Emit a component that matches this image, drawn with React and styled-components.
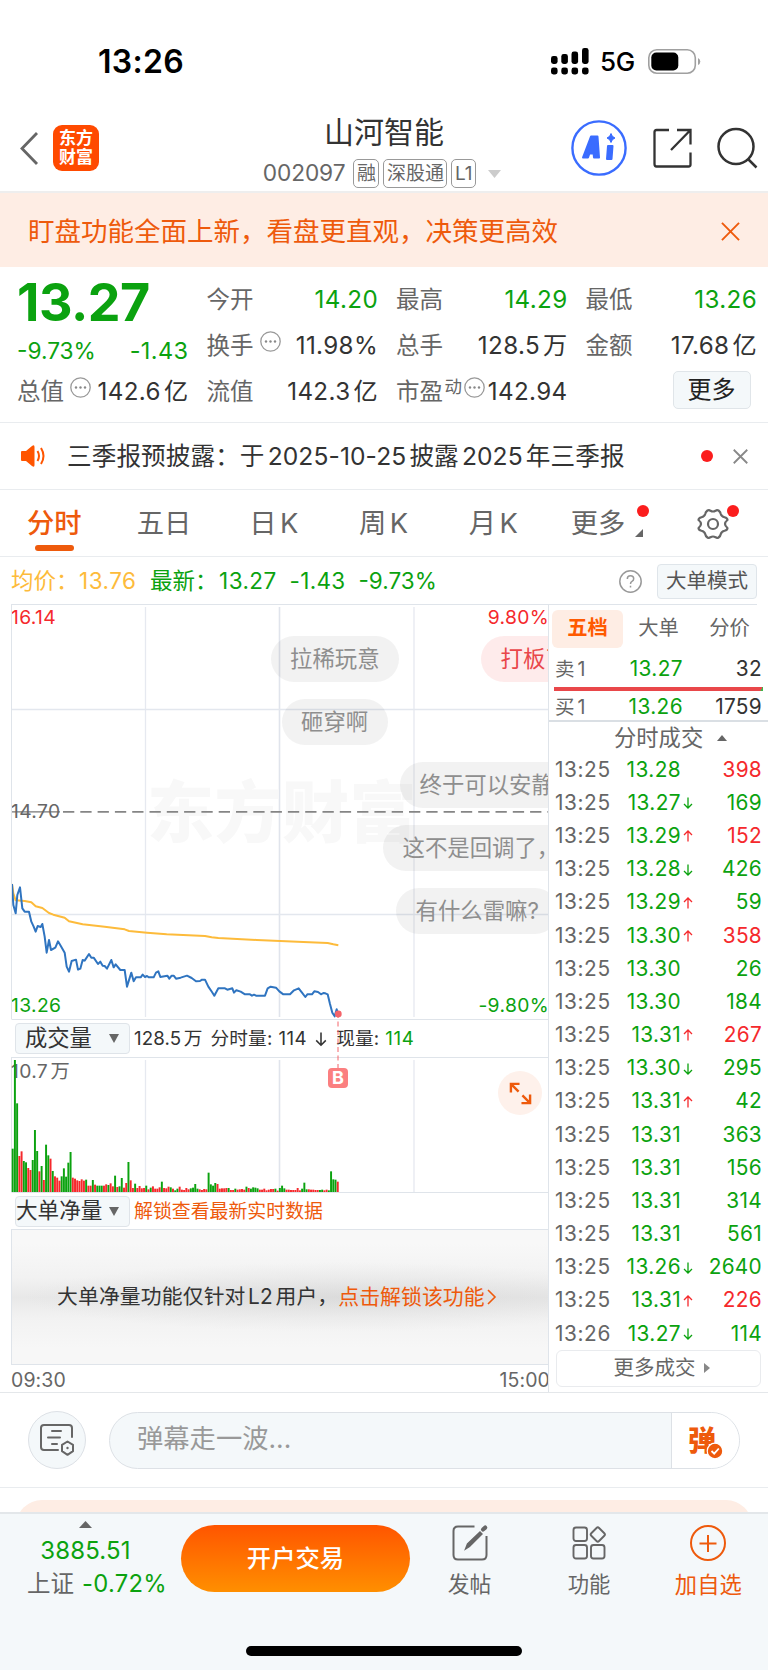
import React from "react";
import styled, { createGlobalStyle } from "styled-components";

const GREEN = "#0ba20f";
const RED = "#f5292c";
const ORANGE = "#ee5a0c";
const GREY = "#666";
const INK = "#333";
const LINE = "#e9ecef";

const Global = createGlobalStyle`
  * { box-sizing: border-box; }
  body {
    margin: 0;
    background: #fff;
    font-family: Inter, "Noto Sans CJK SC", sans-serif;
    line-height: 1;
    color: ${INK};
    text-autospace: normal;
  }
  svg { display: block; flex: none; overflow: visible; }
`;

const Screen = styled.div`
  width: 768px;
  height: 1670px;
  display: flex;
  flex-direction: column;
  overflow: hidden;
  background: #fff;
`;

const T = styled.span`
  font-size: ${(p) => p.$s}px;
  color: ${(p) => p.$c || INK};
  font-weight: ${(p) => p.$w || 400};
  letter-spacing: ${(p) => p.$ls || 0}px;
  margin-left: ${(p) => p.$ml || 0}px;
  margin-right: ${(p) => p.$mr || 0}px;
  white-space: pre;
`;

/* ---------- status bar ---------- */
const StatusBar = styled.div`
  height: 100px;
  flex: none;
  display: flex;
  align-items: center;
  justify-content: space-between;
  padding: 23px 67px 0 98px;
`;
const StatusRight = styled.div`
  display: flex;
  align-items: center;
`;

/* ---------- header ---------- */
const Header = styled.header`
  height: 93px;
  flex: none;
  display: grid;
  grid-template-columns: 1fr auto 1fr;
  border-bottom: 2px solid #eee;
`;
const HeaderLeft = styled.div`
  display: flex;
  align-items: center;
  gap: 15px;
  padding: 5px 0 0 20px;
`;
const Logo = styled.div`
  width: 46px;
  height: 46px;
  border-radius: 9px;
  background: #ff4a00;
  color: #fff;
  font-size: 17px;
  font-weight: 700;
  line-height: 19px;
  display: flex;
  flex-direction: column;
  align-items: center;
  justify-content: center;
`;
const HeaderTitle = styled.div`
  display: flex;
  flex-direction: column;
  align-items: center;
  padding-top: 17px;
`;
const SubTitle = styled.div`
  display: flex;
  align-items: center;
  height: 29px;
  margin: 12px 4px 0 0;
`;
const Badge = styled.span`
  height: 29px;
  border: 1.5px solid #999;
  border-radius: 5px;
  padding: 0 2.5px;
  margin-right: 4px;
  display: flex;
  align-items: center;
  font-size: 19px;
  color: ${GREY};
`;
const HeaderRight = styled.div`
  display: flex;
  align-items: center;
  justify-content: flex-end;
  gap: 25.5px;
  padding: 5px 10px 0 0;
`;

/* ---------- banner ---------- */
const Banner = styled.div`
  height: 74px;
  flex: none;
  background: #feede4;
  display: flex;
  align-items: center;
  justify-content: space-between;
  padding: 2px 28px 0 28px;
`;

/* ---------- quote ---------- */
const Quote = styled.section`
  height: 156px;
  flex: none;
  display: grid;
  grid-template-columns: repeat(4, 170px);
  grid-template-rows: repeat(3, 46px);
  column-gap: 19.5px;
  padding: 10px 0 0 17px;
  border-bottom: 1px solid ${LINE};
`;
const Cell = styled.div`
  display: flex;
  align-items: center;
  justify-content: ${(p) => (p.$end ? "flex-end" : "space-between")};
`;
const LabelGroup = styled.div`
  display: flex;
  align-items: center;
  gap: ${(p) => p.$gap ?? 7}px;
  margin-right: -20px;
`;
const Raised = styled.span`
  display: flex;
  padding-bottom: 10px;
`;
const Price = styled.div`
  grid-row: 1 / 3;
  display: flex;
  flex-direction: column;
`;
const PriceBig = styled.div`
  height: 52px;
  font-size: 52px;
  font-weight: 650;
  letter-spacing: -0.5px;
  color: ${GREEN};
`;
const PriceChange = styled.div`
  display: flex;
  align-items: center;
  justify-content: space-between;
  height: 30px;
  margin-top: 7px;
`;
const MoreButton = styled.button`
  width: 78px;
  height: 38px;
  margin: 0 5px 5px 0;
  border: 1.5px solid #e0e5e9;
  border-radius: 5px;
  background: #f4f8fa;
  font: 400 24px Inter, "Noto Sans CJK SC", sans-serif;
  line-height: 1;
  color: #222;
  padding: 0;
  white-space: nowrap;
`;

/* ---------- notice ---------- */
const Notice = styled.div`
  height: 67px;
  flex: none;
  display: flex;
  align-items: center;
  padding: 0 20px;
  border-bottom: 1px solid ${LINE};
`;
const Dot = styled.i`
  width: 12px;
  height: 12px;
  border-radius: 50%;
  background: #fb1d1d;
`;
const NoticeEnd = styled.div`
  margin-left: auto;
  display: flex;
  align-items: center;
  gap: 20px;
`;

/* ---------- period tabs ---------- */
const Tabs = styled.nav`
  height: 67px;
  flex: none;
  display: grid;
  grid-template-columns: repeat(7, 1fr);
  border-bottom: 1px solid ${LINE};
`;
const Tab = styled.div`
  position: relative;
  display: flex;
  align-items: center;
  justify-content: center;
  padding: 1px ${(p) => p.$pr ?? 1}px 0 ${(p) => p.$pl || 0}px;
  font-size: 27.3px;
  color: ${(p) => (p.$active ? ORANGE : GREY)};
  font-weight: ${(p) => (p.$active ? 500 : 400)};
  &::after {
    content: "";
    display: ${(p) => (p.$active ? "block" : "none")};
    position: absolute;
    bottom: 5px;
    left: 35px;
    width: 39px;
    height: 6px;
    border-radius: 3px;
    background: ${ORANGE};
  }
`;
const TabDot = styled(Dot)`
  position: absolute;
  top: 15px;
  left: ${(p) => p.$x}px;
`;
const Corner = styled.svg`
  align-self: flex-end;
  margin: 0 0 19px 10px;
`;

/* ---------- average line ---------- */
const InfoRow = styled.div`
  height: 47px;
  flex: none;
  display: flex;
  align-items: center;
  padding: 1px 11px 0;
`;
const ModeButton = styled.div`
  width: 100px;
  height: 35px;
  margin-left: 15px;
  border: 1.5px solid #dfe5ea;
  border-radius: 4px;
  background: #f4f8fa;
  display: flex;
  align-items: center;
  justify-content: center;
`;

/* ---------- trading area ---------- */
const Trading = styled.section`
  height: 789px;
  flex: none;
  display: flex;
  border-bottom: 1px solid #e4e7ea;
`;
const ChartColumn = styled.div`
  width: 537px;
  flex: none;
  margin-left: 11px;
  display: flex;
  flex-direction: column;
`;
const Panel = styled.div`
  position: relative;
  height: ${(p) => p.$h}px;
  overflow: ${(p) => (p.$clip ? "hidden" : "visible")};
  border-left: 1px solid #dfe4ea;
  border-top: 1px solid #dfe4ea;
`;
const Layer = styled.svg`
  position: absolute;
  left: -1px;
  top: -1px;
`;
const AxisLabel = styled.span`
  position: absolute;
  font-size: 19.3px;
  letter-spacing: 0.35px;
  color: ${(p) => p.$c};
  ${(p) => p.$pos}
`;
const Watermark = styled.div`
  position: absolute;
  left: 135px;
  top: 174px;
  font-size: 67px;
  font-weight: 900;
  letter-spacing: 0.5px;
  color: #f8f8f8;
`;
const Bubble = styled.div`
  position: absolute;
  left: ${(p) => p.$x}px;
  top: ${(p) => p.$y}px;
  height: 46px;
  padding: 1px 19.5px 0;
  border-radius: 23px;
  display: flex;
  align-items: center;
  white-space: nowrap;
  font-size: 22.4px;
  background: ${(p) => (p.$hot ? "rgba(245,60,60,.1)" : "rgba(60,60,60,.065)")};
  color: ${(p) => (p.$hot ? "#e9474a" : "#8e8e8e")};
`;
const IndicatorRow = styled.div`
  height: ${(p) => p.$h}px;
  display: flex;
  align-items: center;
  padding-left: 3px;
  border-top: 1px solid #dfe4ea;
  border-left: 1px solid #fff;
`;
const Select = styled.div`
  width: 115px;
  height: 31px;
  border: 1.5px solid #dfe4e9;
  border-radius: 4px;
  background: #f4f8fa;
  display: flex;
  align-items: center;
  justify-content: space-between;
  white-space: nowrap;
  padding: 0 10px 0 ${(p) => p.$pl}px;
  font-size: ${(p) => p.$s}px;
`;
const IndicatorText = styled(T)`
  padding-top: 2px;
`;
const Locked = styled.div`
  height: 136px;
  border: 1px solid #dfe4ea;
  border-right: 0;
  background:
    radial-gradient(ellipse 60% 26% at 62% 50%, rgba(190,190,190,.3), rgba(190,190,190,0)),
    linear-gradient(#f8f8f8 10%, #f2f2f2 35%, #e8e8e8 50%, #f2f2f2 66%, #f7f7f7 88%);
  display: flex;
  align-items: center;
  padding-left: 45px;
  white-space: nowrap;
`;
const TimeAxis = styled.div`
  flex: 1;
  display: flex;
  align-items: center;
  justify-content: space-between;
  padding-top: 5px;
  margin-right: -2px;
`;
const Expand = styled.div`
  position: absolute;
  left: 486px;
  top: 13px;
  width: 44px;
  height: 44px;
  border-radius: 50%;
  background: #fef1eb;
  display: flex;
  align-items: center;
  justify-content: center;
`;
const BuyMark = styled.div`
  position: absolute;
  left: 316px;
  top: 10px;
  width: 20px;
  height: 20px;
  border-radius: 4px;
  background: #fb7f80;
  color: #fff;
  font-size: 18px;
  font-weight: 700;
  display: flex;
  align-items: center;
  justify-content: center;
`;

/* ---------- order book ---------- */
const Book = styled.aside`
  flex: 1;
  min-width: 0;
  border-left: 1px solid #dfe4ea;
  display: flex;
  flex-direction: column;
`;
const BookTabs = styled.div`
  height: 48px;
  display: flex;
  align-items: center;
  padding-left: 3px;
  border-top: 1px solid #dfe4ea;
  margin-right: 11px;
`;
const BookTab = styled.div`
  width: 71px;
  height: 38px;
  flex: none;
  border-radius: 6px;
  display: flex;
  align-items: center;
  justify-content: center;
  font-size: 20.3px;
  font-weight: ${(p) => (p.$active ? 700 : 400)};
  color: ${(p) => (p.$active ? "#ff5a00" : GREY)};
  background: ${(p) => (p.$active ? "#feede4" : "none")};
`;
const BookRow = styled.div`
  height: ${(p) => p.$h}px;
  display: grid;
  grid-template-columns: 56px ${(p) => p.$pw || 70}px 14px 1fr;
  align-items: center;
  padding: ${(p) => p.$pt || 0}px 6px 0 6px;
  flex: none;
`;
const Right = styled(T)`
  text-align: right;
`;
const Ratio = styled.div`
  height: 4.5px;
  margin: 0 5px 0 5px;
  background: linear-gradient(120deg, #e9474a 98.6%, #3fb54a 98.8%);
`;
const TradesHead = styled.div`
  height: 33px;
  border-top: 2px solid #dadfe4;
  display: flex;
  align-items: center;
  padding: 2px 0 0 65px;
  gap: 14px;
`;
const MoreTrades = styled.div`
  height: 37px;
  width: 205px;
  margin: 0 0 0 7px;
  padding-left: 6px;
  border: 1.5px solid #e9ebee;
  border-radius: 6px;
  display: flex;
  align-items: center;
  justify-content: center;
  gap: 8px;
`;

/* ---------- comment bar ---------- */
const CommentBar = styled.div`
  height: 95px;
  flex: none;
  display: flex;
  align-items: center;
  padding: 0 28px;
  gap: 23px;
  border-bottom: 1px solid ${LINE};
`;
const RoundButton = styled.div`
  width: 58px;
  height: 58px;
  border: 1.5px solid #dde1e6;
  border-radius: 50%;
  background: #f4f8fa;
  display: flex;
  align-items: center;
  justify-content: center;
`;
const Input = styled.div`
  flex: 1;
  height: 57px;
  border: 1.5px solid #dde1e6;
  border-radius: 29px;
  background: #f4f8fa;
  display: flex;
  align-items: center;
  padding-left: 27px;
  overflow: hidden;
`;
const Placeholder = styled(T)`
  padding-bottom: 2px;
`;
const InputEnd = styled.div`
  position: relative;
  width: 68px;
  height: 100%;
  margin-left: auto;
  border-left: 1.5px solid #dde1e6;
  background: #fff;
  padding: 14px 0 0 16px;
`;
const CheckMark = styled.svg`
  position: absolute;
  left: 35px;
  top: 30px;
`;
const PromoWrap = styled.div`
  height: 24px;
  flex: none;
  padding: 12px 16px 0;
  overflow: hidden;
`;
const Promo = styled.div`
  height: 60px;
  border-radius: 26px;
  background: #feede4;
`;

/* ---------- bottom bar ---------- */
const Bottom = styled.footer`
  flex: 1;
  background: #f4f8fa;
  border-top: 2px solid #e3e7ea;
`;
const Actions = styled.div`
  height: 132px;
  display: flex;
`;
const IndexBox = styled.div`
  width: 181px;
  padding: 7px 0 0 27px;
`;
const IndexTop = styled.div`
  width: 117px;
  height: 39px;
  display: flex;
  flex-direction: column;
  align-items: center;
  gap: 11px;
`;
const IndexLine = styled.div`
  display: flex;
  margin-top: 12px;
`;
const TradeButton = styled.div`
  width: 229px;
  height: 67px;
  margin-top: 11px;
  border-radius: 34px;
  background: linear-gradient(#ff5500, #ff8f00);
  display: flex;
  align-items: center;
  justify-content: center;
`;
const Action = styled.div`
  width: 119.4px;
  padding-top: 11px;
  display: flex;
  flex-direction: column;
  align-items: center;
  gap: 12.5px;
`;
const HomeBar = styled.div`
  width: 276px;
  height: 10px;
  border-radius: 5px;
  background: #000;
  margin: 0 auto;
`;

/* ---------- icons ---------- */
const Cross = ({ size, color, w = 2 }) => (
  <svg width={size} height={size} viewBox="0 0 20 20" fill="none" stroke={color} strokeWidth={w}>
    <path d="M1 1L19 19M19 1L1 19" />
  </svg>
);
const Tri = ({ w, h, dir = "up", color = GREY }) => {
  const d = {
    up: `M0 ${h}L${w / 2} 0L${w} ${h}Z`,
    down: `M0 0L${w} 0L${w / 2} ${h}Z`,
    right: `M0 0L${w} ${h / 2}L0 ${h}Z`,
  }[dir];
  return (
    <svg width={w} height={h}>
      <path d={d} fill={color} />
    </svg>
  );
};
const MoreDots = () => (
  <svg width="21" height="21" viewBox="0 0 21 21">
    <circle cx="10.5" cy="10.5" r="9.7" fill="none" stroke="#999" strokeWidth="1.3" />
    <g fill="#888">
      <circle cx="6" cy="10.5" r="1.2" />
      <circle cx="10.5" cy="10.5" r="1.2" />
      <circle cx="15" cy="10.5" r="1.2" />
    </g>
  </svg>
);
const Arrow = ({ up, color, s = 11 }) => (
  <svg width={s} height={s * 1.2} viewBox="0 0 10 12" fill="none" stroke={color} strokeWidth="1.3">
    {up ? <path d="M5 11.5V1M1 5L5 1L9 5" /> : <path d="M5 .5V11M1 7L5 11L9 7" />}
  </svg>
);

/* ---------- data ---------- */
const bars =
  "g130 g396 g266 r108 r122 g93 g89 r72 r66 g96 g186 g123 r62 g78 r36 g142 g110 r100 g63 r47 r43 r34 g47 g71 g46 g88 g120 r43 r40 r35 r33 r38 r34 g37 r19 r19 g36 r22 g19 g19 g19 r19 r23 g21 r26 r17 g49 r15 g17 g42 r13 r27 g90 r35 r12 g25 r12 r18 r11 r12 g19 r8 g13 r17 r10 r10 r14 g31 r12 r11 r16 g14 r10 g5 g10 r16 r7 r6 r12 r8 g11 g13 g24 g10 r8 r6 r9 r8 g58 g23 g19 g27 r24 r10 r11 r11 r12 g12 r6 r6 g10 r7 r8 r9 r7 g16 r12 g10 g14 g13 g11 r7 r7 r10 r5 r7 r9 r9 g10 r4 g12 g19 g11 r7 r7 r6 r6 r6 r12 r5 g10 g28 g8 r8 r7 r7 r6 r6 g6 g7 r5 r7 g5 g62 g38 g37 r31".split(
    " "
  );
const priceLine =
  "36,852 40,915 47,940 52,885 60,862 67,925 74,935 87,935 94,965 101,980 107,995 113,978 122,981 127,972 134,1010 140,1058 147,1020 153,1050 166,1043 174,1024 182,1037 194,1058 200,1100 207,1115 215,1083 228,1079 234,1109 241,1106 248,1080 254,1082 267,1062 274,1073 281,1073 294,1092 301,1085 308,1097 314,1098 321,1106 334,1080 341,1102 347,1093 361,1110 374,1110 381,1160 394,1118 401,1144 408,1132 422,1132 428,1124 435,1131 441,1128 446,1132 461,1132 468,1118 475,1114 481,1131 502,1127 508,1136 515,1127 521,1127 528,1136 542,1133 561,1127 575,1134 588,1144 600,1143 606,1139 615,1139 625,1160 636,1176 643,1187 655,1165 675,1165 682,1169 697,1165 702,1178 709,1171 722,1175 735,1183 750,1183 756,1187 762,1184 768,1187 795,1187 803,1165 812,1160 828,1163 838,1174 850,1183 870,1183 882,1171 896,1165 906,1178 916,1191 922,1183 936,1183 943,1174 954,1176 963,1183 970,1179 976,1180 983,1183 990,1212 997,1238 1004,1249 1010,1228 1015,1242";
const averageLine =
  "36,852 40,880 47,901 74,903 94,907 107,919 127,924 147,939 160,944 194,953 207,964 248,973 314,980 374,988 387,993 441,998 500,1003 615,1008 635,1012 655,1014 770,1020 840,1023 910,1026 983,1029 1000,1033 1015,1036";
const trades = [
  ["13:25", "13.28", "", "398", 1],
  ["13:25", "13.27", "d", "169", 0],
  ["13:25", "13.29", "u", "152", 1],
  ["13:25", "13.28", "d", "426", 0],
  ["13:25", "13.29", "u", "59", 0],
  ["13:25", "13.30", "u", "358", 1],
  ["13:25", "13.30", "", "26", 0],
  ["13:25", "13.30", "", "184", 0],
  ["13:25", "13.31", "u", "267", 1],
  ["13:25", "13.30", "d", "295", 0],
  ["13:25", "13.31", "u", "42", 0],
  ["13:25", "13.31", "", "363", 0],
  ["13:25", "13.31", "", "156", 0],
  ["13:25", "13.31", "", "314", 0],
  ["13:25", "13.31", "", "561", 0],
  ["13:25", "13.26", "d", "2640", 0],
  ["13:25", "13.31", "u", "226", 1],
  ["13:26", "13.27", "d", "114", 0],
];

const Stat = ({ label, value, green, icon, sup }) => (
  <Cell>
    <LabelGroup $gap={sup ? 1.5 : 6}>
      <T $s={23.5} $c={GREY}>{label}</T>
      {sup && <Raised><T $s={17.5} $c={GREY}>{sup}</T></Raised>}
      {icon && <Raised><MoreDots /></Raised>}
    </LabelGroup>
    <T $s={24.2} $c={green ? GREEN : INK} $ls={0.35} $mr={-1.5}>{value}</T>
  </Cell>
);

const PriceChart = () => (
  <Panel $h={415} $clip>
    <Layer width="538" height="415" fill="none">
      <path d="M134.5 3V413M403 3V413" stroke="#e6e9f0" strokeWidth="1.3" />
      <path d="M268.5 3V413" stroke="#e0e4ec" strokeWidth="1.6" />
      <path d="M0 105.5H538M0 310.5H538" stroke="#e3e7ee" strokeWidth="1.4" />
    </Layer>
    <Watermark>东方财富</Watermark>
    <Layer width="538" height="415" fill="none">
      <path d="M1 207.8H49" stroke="#777" strokeWidth="1.2" />
      <path d="M52 207.8H538" stroke="#858585" strokeWidth="1.7" strokeDasharray="11.3 6" />
      <g transform="translate(-11 -4) scale(.33333)" strokeWidth="6" strokeLinejoin="round">
        <polyline points={averageLine} stroke="#fdbb3b" />
        <polyline points={priceLine} stroke="#2f74c0" />
      </g>
      <circle cx="327.3" cy="410" r="3.4" fill="#f4646a" />
    </Layer>
    <AxisLabel $c={RED} $pos="left:-1px;top:2.500px;">16.14</AxisLabel>
    <AxisLabel $c={RED} $pos="right:-1px;top:2.500px;">9.80%</AxisLabel>
    <AxisLabel $c={GREY} $pos="left:-1px;top:197px;">14.70</AxisLabel>
    <AxisLabel $c={GREEN} $pos="left:-1px;top:391px;">13.26</AxisLabel>
    <AxisLabel $c={GREEN} $pos="right:-1px;top:391px;">-9.80%</AxisLabel>
    <Bubble $x={258.5} $y={30.5}>拉稀玩意</Bubble>
    <Bubble $x={469} $y={30.5} $hot>打板了</Bubble>
    <Bubble $x={269.5} $y={94}>砸穿啊</Bubble>
    <Bubble $x={388} $y={157}>终于可以安静了</Bubble>
    <Bubble $x={371} $y={220}>这不是回调了，</Bubble>
    <Bubble $x={384} $y={283}>有什么雷嘛?</Bubble>
  </Panel>
);

const VolumeChart = () => (
  <Panel $h={135}>
    <AxisLabel $c={GREY} $pos="left:-1px;top:4px;">10.7万</AxisLabel>
    <Layer width="538" height="135">
      <path d="M134.5 3V135M403 3V135" stroke="#e6e9f0" strokeWidth="1.3" />
      <path d="M268.5 3V135" stroke="#e0e4ec" strokeWidth="1.6" />
      {bars.map((b, i) => {
        const h = Number(b.slice(1)) / 3;
        return (
          <rect key={i} x={0.7 + i * 2.2265} y={135 - h} width={1.95} height={h}
            fill={b[0] === "g" ? GREEN : RED} />
        );
      })}
      <path d="M327 -44V11" stroke="#f4646a" strokeWidth="1" strokeDasharray="5 3.5" />
    </Layer>
    <BuyMark>B</BuyMark>
    <Expand>
      <svg width="23" height="23" viewBox="0 0 24 24" fill="none" stroke={ORANGE} strokeWidth="2.5">
        <path d="M2 11V2H11M2 2L10 10M22 13V22H13M22 22L14 14" />
      </svg>
    </Expand>
  </Panel>
);

export default function App() {
  return (
    <Screen>
      <Global />
      <StatusBar>
        <T $s={32} $w={600} $c="#000" $ls={0.3}>13:26</T>
        <StatusRight>
          <svg width="38" height="27" viewBox="0 0 38 27">
            {[[0, 8], [10.3, 6], [20.5, 3.5], [31, 0]].map(([x, y]) => (
              <g key={x}>
                <rect x={x} y={y} width="6.6" height={16 - y} rx="2.4" />
                <rect x={x} y="19.5" width="6.6" height="7" rx="2.4" />
              </g>
            ))}
          </svg>
          <T $s={26} $w={500} $c="#000" $ml={11} $ls={-0.2}>5G</T>
          <svg width="53" height="25" viewBox="0 0 53 25" style={{ marginLeft: 13 }}>
            <rect x=".8" y=".8" width="46.5" height="23.4" rx="8" fill="none" stroke="#a0a0a0" strokeWidth="1.6" />
            <rect x="3.3" y="3.5" width="27" height="18" rx="5" />
            <path d="M50 9Q52.3 10 52.3 12.5T50 16Z" fill="#a0a0a0" />
          </svg>
        </StatusRight>
      </StatusBar>

      <Header>
        <HeaderLeft>
          <svg width="18" height="33" viewBox="0 0 18 33" fill="none" stroke="#666" strokeWidth="2.8">
            <path d="M17 1L2 16.5L17 32" />
          </svg>
          <Logo><span>东方</span><span>财富</span></Logo>
        </HeaderLeft>
        <HeaderTitle>
          <T $s={30}>山河智能</T>
          <SubTitle>
            <T $s={22.7} $c={GREY} $ls={-0.1} $mr={8}>002097</T>
            <Badge>融</Badge>
            <Badge>深股通</Badge>
            <Badge>L1</Badge>
            <T $s={8} $mr={6}> </T>
            <Tri w={13} h={8} dir="down" color="#ccc" />
          </SubTitle>
        </HeaderTitle>
        <HeaderRight>
          <svg width="56" height="56" viewBox="0 0 56 56">
            <circle cx="28" cy="28" r="26.6" fill="none" stroke="#3a6cff" strokeWidth="2.4" />
            <path d="M12 37.500L20 16.500H26.500L28 37.500H23L22.600 33.500H18.400L17 37.500ZM19.8 29.5H22.2L22 24Z" fill="#3a6cff" fillRule="evenodd" stroke="#3a6cff" strokeWidth="2" strokeLinejoin="round" />
            <path d="M37 26H41.500L40.500 39H36Z" fill="#3a6cff" stroke="#3a6cff" strokeWidth="2" strokeLinejoin="round" />
            <path d="M40 13.5Q40.8 17 44 18Q40.8 19 40 22.5Q39.2 19 36 18Q39.2 17 40 13.5Z" fill="#3a6cff" stroke="#3a6cff" strokeWidth="1" />
          </svg>
          <svg width="39" height="40" viewBox="0 0 39 40" fill="none" stroke="#333" strokeWidth="2.3">
            <path d="M16 2H3.5Q1.5 2 1.5 4V36Q1.5 38.5 3.5 38.5H35.5Q37.5 38.5 37.5 36.5V24.500" />
            <path d="M24 2H37.500V16.500M37 2.500L18 22" />
          </svg>
          <svg width="41" height="40" viewBox="0 0 41 40" fill="none" stroke="#333" strokeWidth="2.5">
            <circle cx="19" cy="18.500" r="17.500" />
            <path d="M31 31L39.500 39.500" />
          </svg>
        </HeaderRight>
      </Header>

      <Banner>
        <T $s={26.5} $c={ORANGE}>盯盘功能全面上新，看盘更直观，决策更高效</T>
        <Cross size={19} color={ORANGE} />
      </Banner>

      <Quote>
        <Price>
          <PriceBig>13.27</PriceBig>
          <PriceChange>
            <T $s={22.7} $c={GREEN}>-9.73%</T>
            <T $s={23.5} $c={GREEN} $ls={0.4} $mr={-1.5}>-1.43</T>
          </PriceChange>
        </Price>
        <Stat label="今开" value="14.20" green />
        <Stat label="最高" value="14.29" green />
        <Stat label="最低" value="13.26" green />
        <Stat label="换手" value="11.98%" icon />
        <Stat label="总手" value="128.5万" />
        <Stat label="金额" value="17.68亿" />
        <Stat label="总值" value="142.6亿" icon />
        <Stat label="流值" value="142.3亿" />
        <Stat label="市盈" value="142.94" sup="动" icon />
        <Cell $end><MoreButton>更多</MoreButton></Cell>
      </Quote>

      <Notice>
        <svg width="26" height="22" viewBox="0 0 26 22">
          <path d="M1 7Q1 6 2 6H6L12 1Q14.500 -1 14.500 2V20Q14.500 23 12 21L6 16H2Q1 16 1 15Z" fill="#ff5500" />
          <path d="M17.500 6Q20.500 11 17.500 16M21 3Q26 11 21 19" fill="none" stroke="#ff5500" strokeWidth="2" />
        </svg>
        <T $s={24.6} $ml={21} $ls={0.1}>三季报预披露：于2025-10-25披露2025年三季报</T>
        <NoticeEnd>
          <Dot />
          <Cross size={15} color="#888" w={2.4} />
        </NoticeEnd>
      </Notice>

      <Tabs>
        <Tab $active>分时</Tab>
        <Tab>五日</Tab>
        <Tab>日K</Tab>
        <Tab>周K</Tab>
        <Tab>月K</Tab>
        <Tab $pl={7} $pr={0}>
          更多
          <Corner width="8" height="8"><path d="M8 0V8H0Z" fill={GREY} /></Corner>
          <TabDot $x={88.5} />
        </Tab>
        <Tab $pr={0}>
          <svg width="32" height="30" viewBox="0 0 32 30" fill="none" stroke="#666" strokeWidth="2.200" strokeLinejoin="round">
            <path d="M10.500 1.500Q12 .5 13.500 1.800Q16 3.200 18.500 1.800Q20 .5 21.500 1.500Q23.500 3 23.800 5Q24.500 7.500 27.500 8.200Q30.500 9 30.500 11Q28 13 28 15T30.500 19Q30.500 21 27.500 21.800Q24.500 22.500 23.800 25Q23.500 27 21.500 28.500Q20 29.500 18.500 28.200Q16 26.800 13.500 28.200Q12 29.500 10.500 28.500Q8.500 27 8.200 25Q7.500 22.500 4.500 21.800Q1.500 21 1.500 19Q4 17 4 15T1.500 11Q1.500 9 4.500 8.200Q7.500 7.500 8.200 5Q8.500 3 10.500 1.500Z" />
            <circle cx="16" cy="15" r="5" />
          </svg>
          <TabDot $x={69} />
        </Tab>
      </Tabs>

      <InfoRow>
        <T $s={22.5} $c="#fdbb3b">均价：</T>
        <T $s={22.5} $c="#fdbb3b" $ml={0.5} $ls={0.5}>13.76</T>
        <T $s={22.5} $c={GREEN} $ml={13.5}>最新：</T>
        <T $s={22.5} $c={GREEN} $ml={1.5} $ls={0.4}>13.27</T>
        <T $s={22.5} $c={GREEN} $ml={13} $ls={0.3}>-1.43</T>
        <T $s={22.5} $c={GREEN} $ml={13} $ls={0}>-9.73%</T>
        <svg width="23" height="23" viewBox="0 0 23 23" fill="none" stroke="#999" strokeWidth="1.500" style={{ marginLeft: "auto" }}>
          <circle cx="11.500" cy="11.500" r="10.700" />
          <path d="M8.300 9Q8.300 5.800 11.500 5.800T14.700 8.800Q14.700 10.500 13 11.400Q11.500 12.200 11.500 14M11.500 15.800V17.500" />
        </svg>
        <ModeButton><T $s={20.5} $c="#555">大单模式</T></ModeButton>
      </InfoRow>

      <Trading>
        <ChartColumn>
          <PriceChart />
          <IndicatorRow $h={38}>
            <Select $s={22.3} $pl={9}>成交量<Tri w={10} h={9} dir="down" /></Select>
            <IndicatorText $s={18.7} $ml={4} $ls={0.15}>128.5万</IndicatorText>
            <IndicatorText $s={18.7} $ml={8} $ls={0.1}>分时量:</IndicatorText>
            <IndicatorText $s={18.7} $ml={6} $ls={0.5}>114</IndicatorText>
            <IndicatorText $s={18.7} $ml={8}><Arrow color={INK} s={12} /></IndicatorText>
            <IndicatorText $s={18.7} $ml={9} $ls={0.1}>现量:</IndicatorText>
            <IndicatorText $s={18.7} $ml={6} $ls={0.7} $c={GREEN}>114</IndicatorText>
          </IndicatorRow>
          <VolumeChart />
          <IndicatorRow $h={37}>
            <Select $s={21.6} $pl={0}>大单净量<Tri w={10} h={9} dir="down" /></Select>
            <IndicatorText $s={18.9} $ml={4} $c={ORANGE}>解锁查看最新实时数据</IndicatorText>
          </IndicatorRow>
          <Locked>
            <T $s={20.8} $ls={0.15}>大单净量功能仅针对L2用户，</T>
            <T $s={20.9} $c={ORANGE}>点击解锁该功能</T>
            <svg width="9" height="16" viewBox="0 0 9 16" fill="none" stroke={ORANGE} strokeWidth="1.600" style={{ marginLeft: 2 }}>
              <path d="M1 1L8 8L1 15" />
            </svg>
          </Locked>
          <TimeAxis>
            <T $s={19.5} $c={GREY} $ls={0.1}>09:30</T>
            <T $s={19.5} $c={GREY} $ls={0.1}>15:00</T>
          </TimeAxis>
        </ChartColumn>
        <Book>
          <BookTabs>
            <BookTab $active>五档</BookTab>
            <BookTab>大单</BookTab>
            <BookTab>分价</BookTab>
          </BookTabs>
          <BookRow $h={34.5} $pw={72}>
            <T $s={19.5} $c={GREY} $ls={0.5}>卖1</T>
            <Right $s={20.8} $c={GREEN} $ls={0.4}>13.27</Right>
            <span />
            <Right $s={20.8} $ls={0.3}>32</Right>
          </BookRow>
          <Ratio />
          <BookRow $h={28.5} $pt={5} $pw={72}>
            <T $s={19.5} $c={GREY} $ls={0.5}>买1</T>
            <Right $s={20.8} $c={GREEN} $ls={0.4}>13.26</Right>
            <span />
            <Right $s={20.8} $ls={0.3}>1759</Right>
          </BookRow>
          <TradesHead>
            <T $s={22.300} $c={GREY}>分时成交</T>
            <Tri w={10} h={6} />
          </TradesHead>
          {trades.map(([time, price, dir, vol, hot], i) => (
            <BookRow key={i} $h={33.18} $pt={2}>
              <T $s={20.800} $c={GREY} $ls={0.6}>{time}</T>
              <Right $s={20.800} $c={GREEN} $ls={0.4}>{price}</Right>
              <T $s={20.800} $ml={1.5}>
                {dir && <Arrow up={dir === "u"} color={dir === "u" ? RED : GREEN} s={10} />}
              </T>
              <Right $s={20.800} $c={hot ? RED : GREEN} $ls={0.3}>{vol}</Right>
            </BookRow>
          ))}
          <MoreTrades>
            <T $s={20.500} $c={GREY}>更多成交</T>
            <Tri w={6} h={10} dir="right" color="#888" />
          </MoreTrades>
        </Book>
      </Trading>

      <CommentBar>
        <RoundButton>
          <svg width="34" height="32" viewBox="0 0 34 32" fill="none" stroke="#666" strokeWidth="2" strokeLinecap="round">
            <path d="M32 13V4Q32 1 29 1H4Q1 1 1 4V23Q1 26 4 26H18" />
            <path d="M12 7H21M8 13.500H20M12 20H17" />
            <path d="M27.500 17.500L33 20.800V27.200L27.500 30.800L22 27.200V20.800Z" strokeLinejoin="round" />
            <circle cx="27.500" cy="24" r="1.200" fill="#666" stroke="none" />
          </svg>
        </RoundButton>
        <Input>
          <Placeholder $s={26.300} $c="#999">弹幕走一波...</Placeholder>
          <InputEnd>
            <T $s={28} $w={900} $c={ORANGE}>弹</T>
            <CheckMark width="16" height="16" viewBox="0 0 16 16">
              <circle cx="8" cy="8" r="7.800" fill={ORANGE} stroke="#fff" strokeWidth="1.200" />
              <path d="M4.500 8L7.200 10.600L11.800 5.500" fill="none" stroke="#fff" strokeWidth="1.800" />
            </CheckMark>
          </InputEnd>
        </Input>
      </CommentBar>
      <PromoWrap><Promo /></PromoWrap>

      <Bottom>
        <Actions>
          <IndexBox>
            <IndexTop>
              <Tri w={13} h={7} />
              <T $s={24} $c={GREEN} $ls={0.15}>3885.51</T>
            </IndexTop>
            <IndexLine>
              <T $s={23.500} $c={GREY}>上证</T>
              <T $s={23.800} $c={GREEN} $ml={8} $ls={0.3}>-0.72%</T>
            </IndexLine>
          </IndexBox>
          <TradeButton><T $s={24.300} $w={500} $c="#fff">开户交易</T></TradeButton>
          <Action>
            <svg width="36" height="36" viewBox="0 0 36 36" fill="none" stroke="#666" strokeWidth="2">
              <path d="M22.500 1.500H6Q1.500 1.500 1.500 6V30Q1.500 34.500 6 34.500H30Q34.500 34.500 34.500 30V11" />
              <path d="M13.500 24L15.500 19L28 7L30 9L17.500 21.500Z" fill="#666" strokeWidth="1.400" />
              <path d="M31 4.500L33.200 2.600" strokeWidth="4.200" strokeLinecap="round" />
            </svg>
            <T $s={21.800} $c={GREY}>发帖</T>
          </Action>
          <Action>
            <svg width="34" height="36" viewBox="0 0 34 36" fill="none" stroke="#666" strokeWidth="1.900">
              <rect x="1.500" y="2.500" width="13.500" height="13.500" rx="2.500" />
              <rect x="1.500" y="20" width="13.500" height="13.500" rx="2.500" />
              <rect x="19" y="20" width="13.500" height="13.500" rx="2.500" />
              <rect x="20.300" y="4" width="11" height="11" rx="1.800" transform="rotate(45 25.800 9.500)" />
            </svg>
            <T $s={21.300} $c={GREY}>功能</T>
          </Action>
          <Action>
            <svg width="36" height="36" viewBox="0 0 36 36" fill="none" stroke={ORANGE} strokeWidth="2">
              <circle cx="18" cy="18" r="17" />
              <path d="M18 10V27M9.500 18.500H26.500" />
            </svg>
            <T $s={22.300} $c={ORANGE}>加自选</T>
          </Action>
        </Actions>
        <HomeBar />
      </Bottom>
    </Screen>
  );
}
